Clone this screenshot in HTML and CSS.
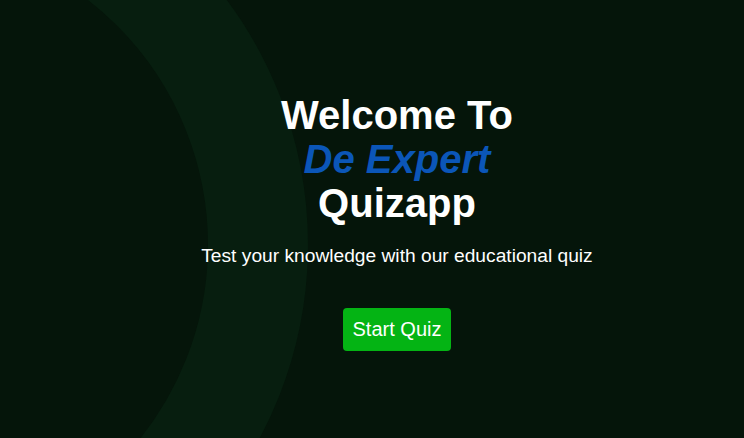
FILE: index.html
```html
<!DOCTYPE html>
<html>
<head>
<meta charset="utf-8">
<link rel="stylesheet" href="styles.css">
</head>
<body>
<div class="page">
  <div class="ring"></div>
  <main class="hero">
    <h1 class="title">Welcome To<br><span class="brand">De Expert</span><br>Quizapp</h1>
    <p class="subtitle">Test your knowledge with our educational quiz</p>
    <button class="start">Start Quiz</button>
  </main>
</div>
</body>
</html>
```
FILE: styles.css
```css
html, body {
  margin: 0;
  padding: 0;
  height: 100%;
}
body {
  background: #05150a;
  font-family: "Liberation Sans", Arial, sans-serif;
  color: #ffffff;
  overflow: hidden;
}
.page {
  position: relative;
  height: 100%;
  display: flex;
  align-items: center;
  justify-content: center;
  padding-left: 50px;
  box-sizing: border-box;
  overflow: hidden;
}
.ring {
  position: absolute;
  left: -512px;
  top: -165px;
  width: 620px;
  height: 620px;
  border: 100px solid #071e0f;
  border-radius: 50%;
}
.hero {
  position: relative;
  display: flex;
  flex-direction: column;
  align-items: center;
  text-align: center;
  margin-top: 6px;
}
.title {
  margin: 0;
  font-size: 40px;
  line-height: 44px;
  font-weight: bold;
}
.brand {
  color: #0b56b8;
  font-style: italic;
}
.subtitle {
  margin: 20px 0 0;
  font-size: 19.2px;
  line-height: 22px;
}
.start {
  margin-top: 41px;
  background: #04b414;
  color: #ffffff;
  border: none;
  border-radius: 4px;
  font-family: "Liberation Sans", Arial, sans-serif;
  font-size: 20px;
  line-height: 23px;
  padding: 10px 10px;
  white-space: nowrap;
}
```
